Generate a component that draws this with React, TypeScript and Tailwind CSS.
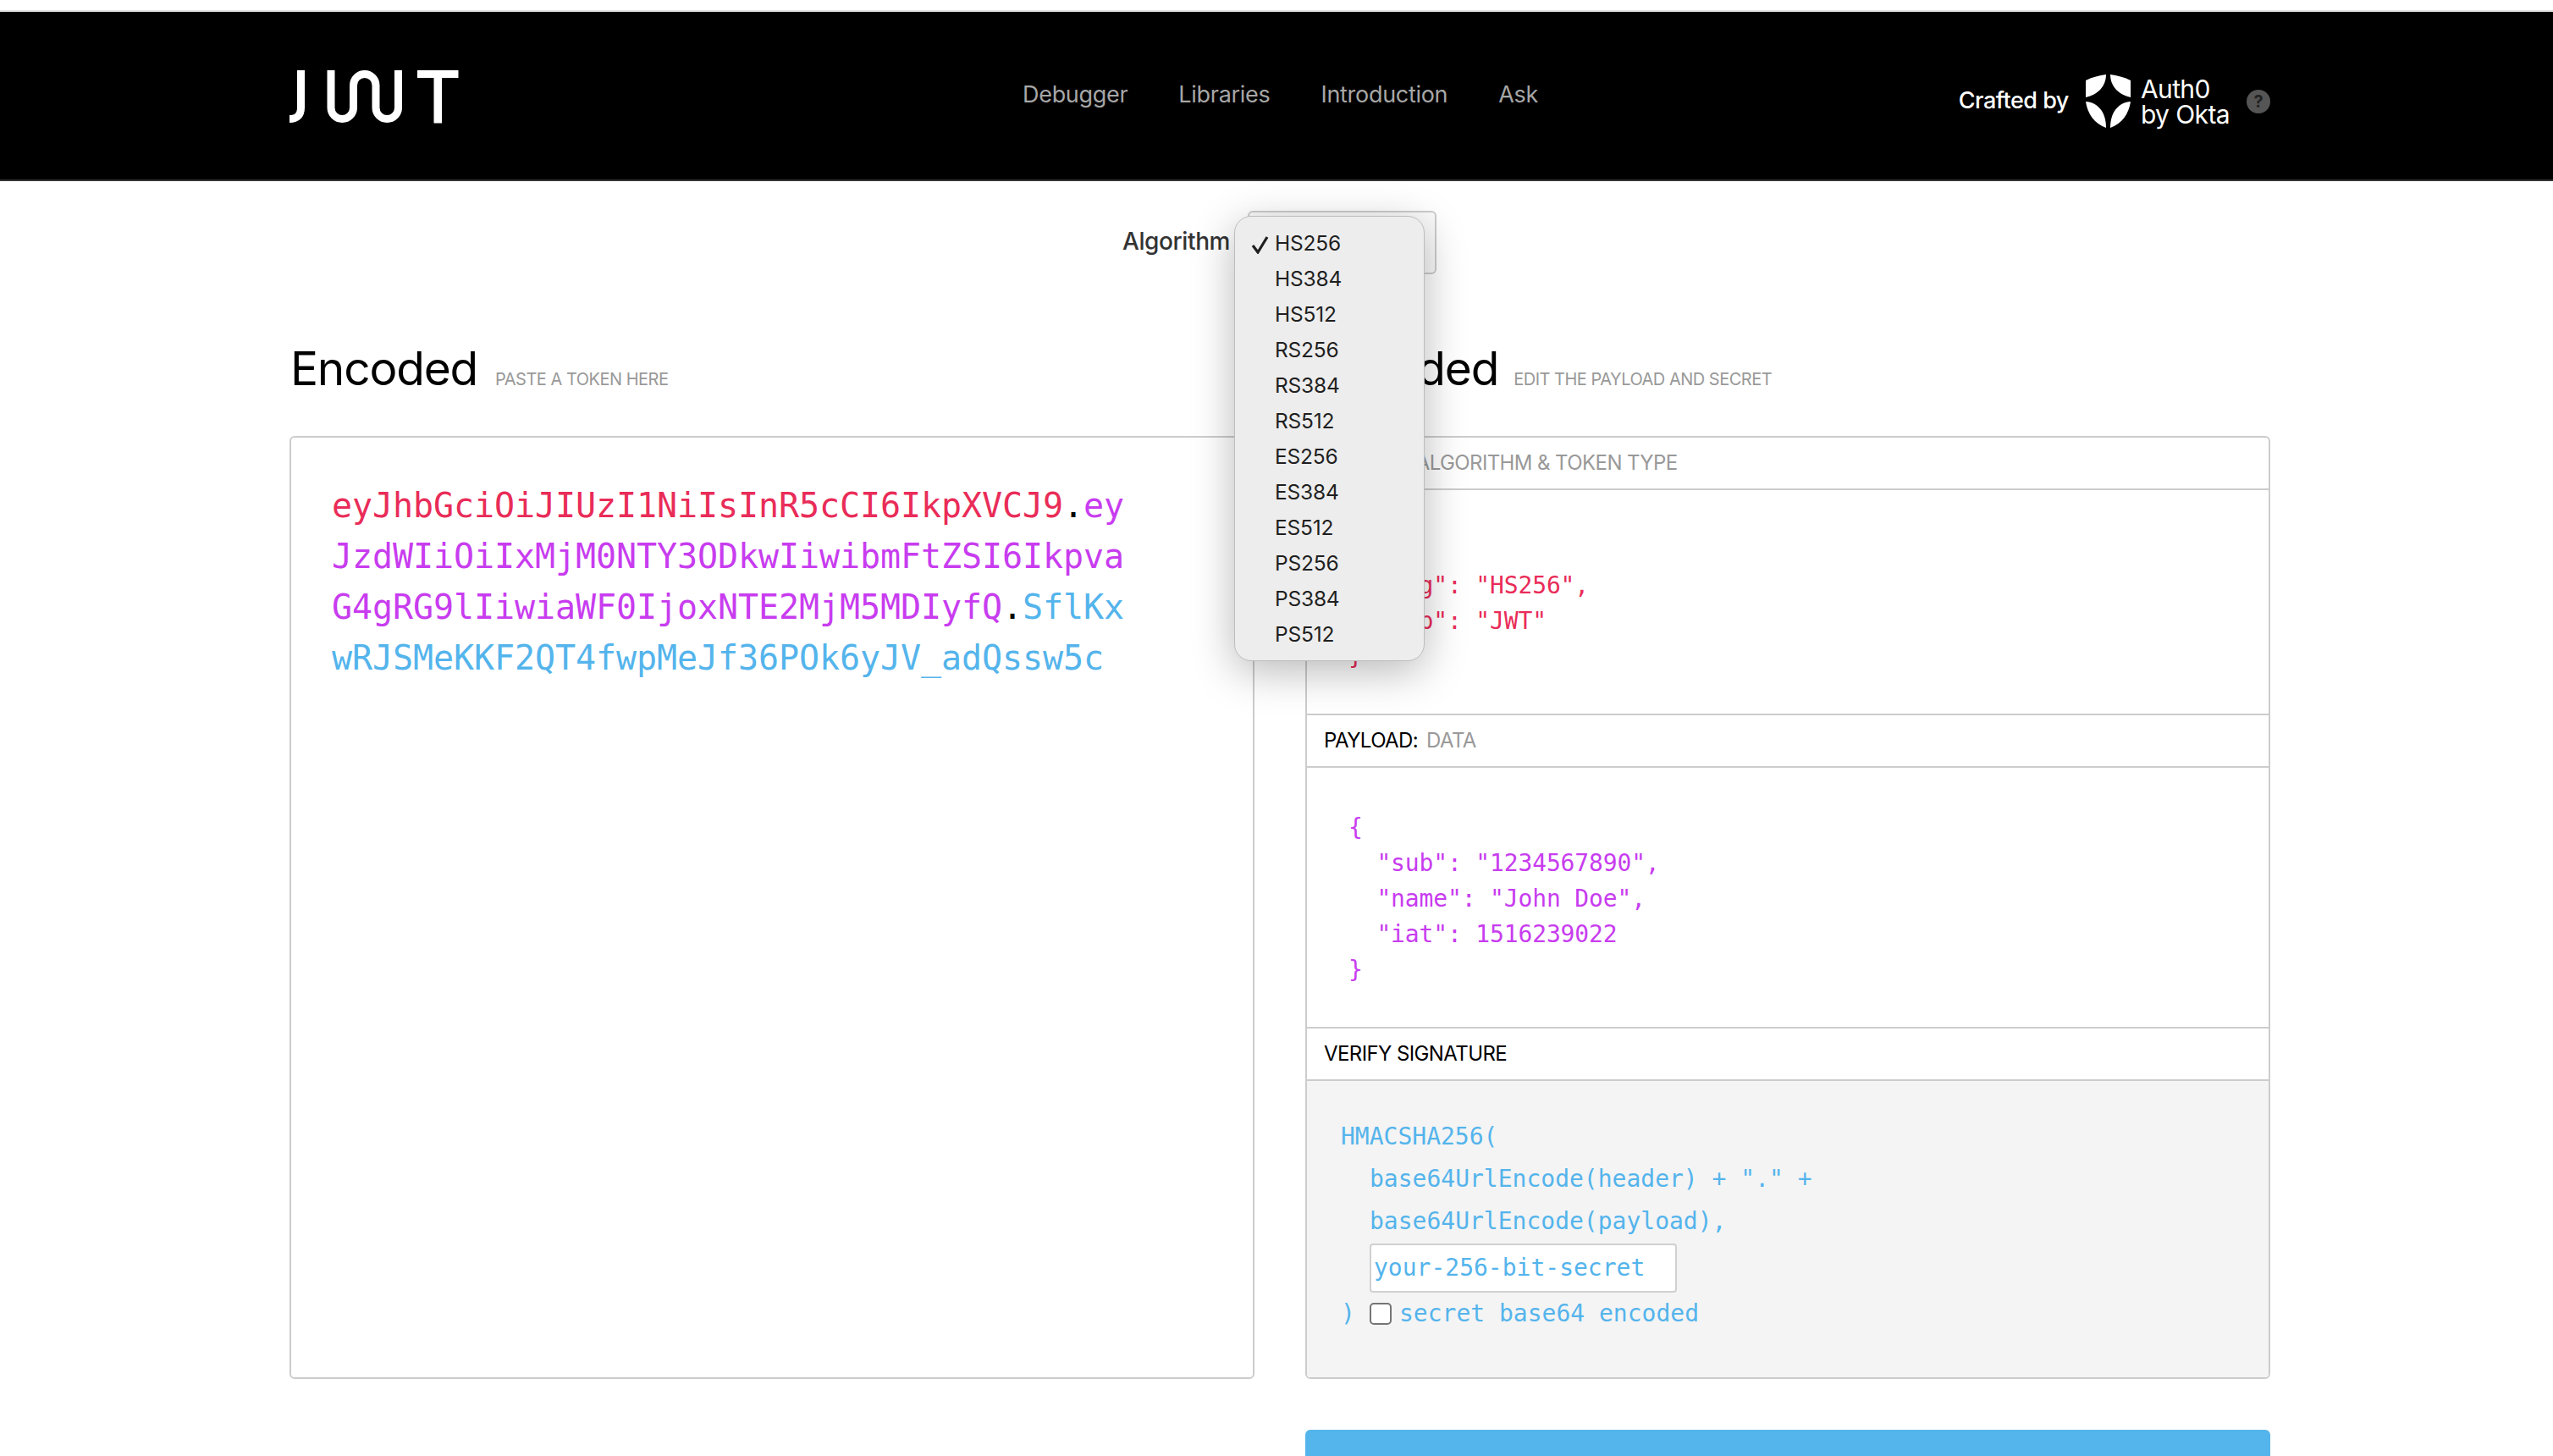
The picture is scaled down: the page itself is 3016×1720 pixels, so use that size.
import React from "react";

const sans = "font-['Inter','Liberation_Sans',sans-serif]";
const mono = "font-['DejaVu_Sans_Mono','Liberation_Mono',monospace]";

function JwtLogo() {
  return (
    <svg width="200" height="64" viewBox="342 82 200 64" fill="none" className="block">
      <g stroke="#fff" strokeWidth="9">
        <path d="M355.5 83V127Q355.5 140.5 342 140.5" />
        <path d="M391 83V127.25a13.25 13.25 0 0 0 26.5 0V100.75a13.25 13.25 0 0 1 26.5 0V127.25a13.25 13.25 0 0 0 26.5 0V83" />
      </g>
      <path d="M493 83H541.5V92H522V145.5H512.5V92H493Z" fill="#fff" />
    </svg>
  );
}

function Shield() {
  return (
    <svg width="53" height="64" viewBox="0 0 53 64" fill="#fff" className="block">
      <path d="M0 7C8 3 16 1 24 0C24 14 14 24 0 27Z" />
      <path d="M29 0C37 1 45 3 53 7V27C39 24 29 14 29 0Z" />
      <path d="M0 32C14 33 24 44 24 63C10 58 2 46 0 32Z" />
      <path d="M53 32C39 33 29 44 29 63C43 58 51 46 53 32Z" />
    </svg>
  );
}

function PanelHeader({ title, sub }: { title: string; sub?: string }) {
  return (
    <div className="h-[62px] flex items-center px-[20px] text-[24px] tracking-[-0.6px] text-black border-b-2 border-[#cccccc]">
      <span>{title}</span>
      {sub && <span className="ml-[10px] text-[#999999]">{sub}</span>}
    </div>
  );
}

const algos = ["HS256","HS384","HS512","RS256","RS384","RS512","ES256","ES384","ES512","PS256","PS384","PS512"];

export default function App() {
  return (
    <div className={`relative h-[1720px] overflow-hidden bg-white ${sans}`}>
      <div className="h-[14px] border-b-2 border-[#e0e0e0]" />
      <header className="h-[200px] bg-black border-b-2 border-[#333333] flex">
        <div className="w-[2340px] ml-[342px] flex">
          <div className="mt-[68px]"><JwtLogo /></div>
          <nav className="ml-[666px] mt-[80px] flex gap-[60px] h-[36px] items-center text-[27px] tracking-[-0.3px] text-[#a6a6a6]">
            <span>Debugger</span>
            <span>Libraries</span>
            <span>Introduction</span>
            <span>Ask</span>
          </nav>
          <div className="ml-auto mt-[74px] flex h-[64px] items-center text-white">
            <span className="text-[27px] font-medium tracking-[-0.5px] -mt-[1px]">Crafted by</span>
            <span className="ml-[20px]"><Shield /></span>
            <span className="ml-[12px] text-[30px] leading-[30px] tracking-[-0.6px]">Auth0<br />by Okta</span>
            <span className="ml-[20px] w-[28px] h-[28px] rounded-full bg-[#555555] flex items-center justify-center text-[20px] font-bold text-[#222222]">?</span>
          </div>
        </div>
      </header>

      <div className="w-[2340px] ml-[342px]">
        <div className="h-[110px] flex items-start">
          <span className="ml-[984px] mt-[51px] text-[28px] font-medium tracking-[-0.4px] text-[#333333] leading-[40px]">Algorithm</span>
          <div className="ml-[21px] mt-[35px] w-[223px] h-[75px] rounded-[6px] border-2 border-[#cccccc] bg-[#fafafa]" />
        </div>

        <div className="mt-[81px] flex gap-[60px] h-[60px] items-end">
          <div className="w-[1140px] flex items-baseline">
            <h2 className="text-[55px] leading-[60px] tracking-[-1.2px] text-black ml-[1px]">Encoded</h2>
            <span className="ml-[21px] text-[20px] tracking-[-0.5px] text-[#999999]">PASTE A TOKEN HERE</span>
          </div>
          <div className="w-[1140px] flex items-baseline">
            <h2 className="text-[55px] leading-[60px] tracking-[-1.2px] text-black ml-[1px]">Decoded</h2>
            <span className="ml-[18px] text-[20px] tracking-[-0.5px] text-[#999999]">EDIT THE PAYLOAD AND SECRET</span>
          </div>
        </div>

        <div className="mt-[50px] flex gap-[60px]">
          <div className={`w-[1140px] h-[1114px] border-2 border-[#cccccc] rounded-[6px] pl-[48px] pt-[50px] text-[40px] leading-[60px] tracking-[-0.08px] ${mono}`}>
            <div><span className="text-[#e92c58]">eyJhbGciOiJIUzI1NiIsInR5cCI6IkpXVCJ9</span><span className="text-black">.</span><span className="text-[#c83cef]">ey</span></div>
            <div className="text-[#c83cef]">JzdWIiOiIxMjM0NTY3ODkwIiwibmFtZSI6Ikpva</div>
            <div><span className="text-[#c83cef]">G4gRG9lIiwiaWF0IjoxNTE2MjM5MDIyfQ</span><span className="text-black">.</span><span className="text-[#54b4ec]">SflKx</span></div>
            <div className="text-[#54b4ec]">wRJSMeKKF2QT4fwpMeJf36POk6yJV_adQssw5c</div>
          </div>

          <div className="w-[1140px] h-[1114px] border-2 border-[#cccccc] rounded-[6px] flex flex-col overflow-hidden">
            <PanelHeader title="HEADER:" sub="ALGORITHM & TOKEN TYPE" />
            <div className={`h-[266px] border-b-2 border-[#cccccc] pl-[49px] pt-[50px] text-[28px] leading-[42px] tracking-[-0.15px] text-[#e92c58] whitespace-pre ${mono}`}>
              {'{\n  "alg": "HS256",\n  "typ": "JWT"\n}'}
            </div>
            <PanelHeader title="PAYLOAD:" sub="DATA" />
            <div className={`h-[308px] border-b-2 border-[#cccccc] pl-[49px] pt-[50px] text-[28px] leading-[42px] tracking-[-0.15px] text-[#c83cef] whitespace-pre ${mono}`}>
              {'{\n  "sub": "1234567890",\n  "name": "John Doe",\n  "iat": 1516239022\n}'}
            </div>
            <PanelHeader title="VERIFY SIGNATURE" />
            <div className={`flex-1 bg-[#f4f4f4] pl-[40px] pt-[41px] text-[28px] leading-[50px] text-[#54b4ec] ${mono}`}>
              <div>HMACSHA256(</div>
              <div className="pl-[34px]">base64UrlEncode(header) + "." +</div>
              <div className="pl-[34px]">base64UrlEncode(payload),</div>
              <div className="ml-[34px] mt-[1px] w-[363px] h-[58px] bg-white border-2 border-[#d0d0d0] rounded-[4px] pl-[3px] flex items-center leading-none">your-256-bit-secret</div>
              <div className="flex items-center h-[50px]">
                <span className="w-[34px]">)</span>
                <span className="w-[26px] h-[26px] rounded-[5px] border-2 border-[#757575] bg-white" />
                <span className="ml-[9px]">secret base64 encoded</span>
              </div>
            </div>
          </div>
        </div>

        <div className="mt-[60px] ml-[1200px] w-[1140px] h-[60px] rounded-t-[6px] bg-[#54b4ec]" />
      </div>

      <div className="absolute left-[1458px] top-[255px] w-[225px] h-[526px] rounded-[20px] border border-[#bdbdbd] bg-[#ededed] shadow-[0_12px_50px_rgba(0,0,0,0.28)] pt-[10px] text-[24.5px] leading-[42px] tracking-[-0.2px] text-[#1f1f1f]">
        {algos.map((a, i) => (
          <div key={a} className="h-[42px] flex items-center">
            <span className="w-[47px] flex justify-end pr-[6px]">
              {i === 0 && (
                <svg width="22" height="22" viewBox="0 0 22 22" fill="none" stroke="#1f1f1f" strokeWidth="3.2" className="block mt-[3px]">
                  <path d="M2 12L8 20L19 2" />
                </svg>
              )}
            </span>
            <span>{a}</span>
          </div>
        ))}
      </div>
    </div>
  );
}
